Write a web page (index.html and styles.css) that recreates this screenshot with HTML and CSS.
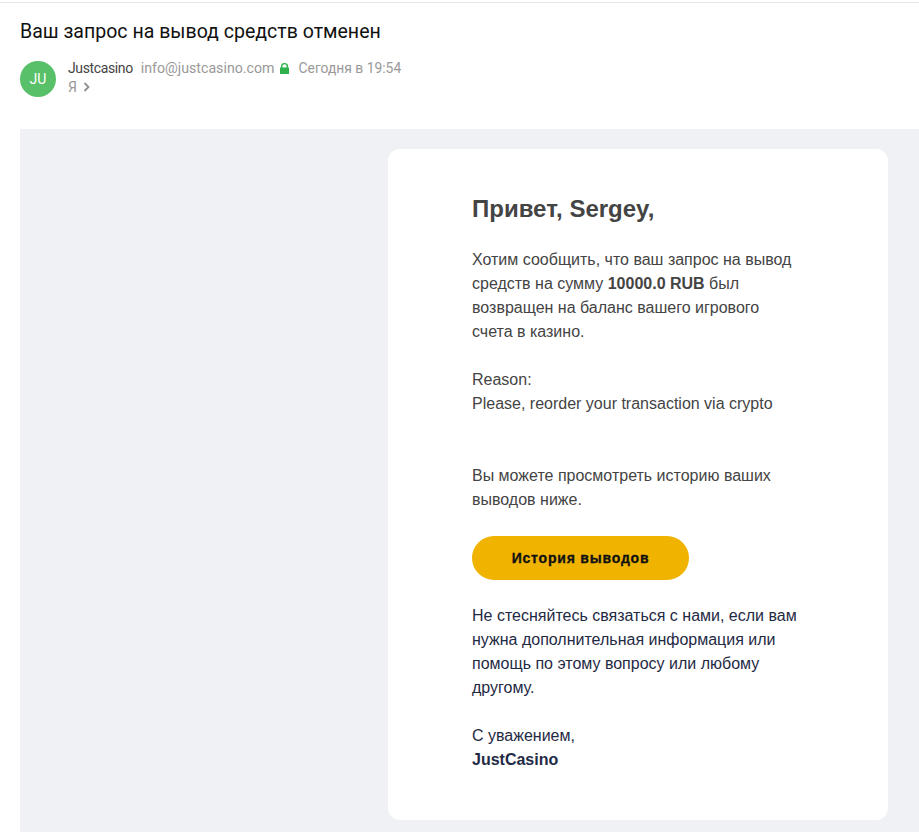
FILE: index.html
```html
<!DOCTYPE html>
<html lang="ru">
<head>
<meta charset="utf-8">
<title>Ваш запрос на вывод средств отменен</title>
<link rel="stylesheet" href="styles.css">
</head>
<body>
<header class="mail-head">
  <h1 class="subject">Ваш запрос на вывод средств отменен</h1>
  <div class="meta">
    <div class="avatar">JU</div>
    <div class="meta-text">
      <div class="meta-line">
        <span class="sender">Justcasino</span>
        <span class="addr">info@justcasino.com</span>
        <svg class="lock" width="9" height="11" viewBox="0 0 9 11"><path d="M0 4.5h1V3a3.5 3 0 0 1 7 0v1.500h1V11H0zM2.400 4.500h4.200V3a2.100 1.700 0 0 0-4.200 0z" fill="#2fb24c" fill-rule="evenodd"/></svg>
        <span class="date">Сегодня в 19:54</span>
      </div>
      <div class="meta-line to">
        <span>Я</span>
        <svg class="chev" width="7" height="10" viewBox="0 0 7 10"><path d="M1.500 1l4 4-4 4" fill="none" stroke="#8f8f8f" stroke-width="1.800"/></svg>
      </div>
    </div>
  </div>
</header>
<main class="panel">
  <article class="card">
    <h2 class="hello">Привет, Sergey,</h2>
    <p class="grey">Хотим сообщить, что ваш запрос на вывод<br>средств на сумму <b>10000.0 RUB</b> был<br>возвращен на баланс вашего игрового<br>счета в казино.</p>
    <p class="grey gap">Reason:<br>Please, reorder your transaction via crypto</p>
    <p class="grey gap2">Вы можете просмотреть историю ваших<br>выводов ниже.</p>
    <a class="btn">История выводов</a>
    <p class="navy">Не стесняйтесь связаться с нами, если вам<br>нужна дополнительная информация или<br>помощь по этому вопросу или любому<br>другому.</p>
    <p class="navy gap">С уважением,<br><b>JustCasino</b></p>
  </article>
</main>
</body>
</html>
```

FILE: styles.css
```css
* { box-sizing: border-box; }
html, body { margin: 0; padding: 0; background: #fff; height: 832px; overflow: hidden; }
body { font-family: "Liberation Sans", Arial, sans-serif; }

.mail-head {
  height: 129px;
  border-top: 1px solid #e8e8e8;
  margin-top: 2px;
  margin-bottom: -2px;
  padding: 17px 20px 0;
  font-family: Roboto, "Noto Sans", sans-serif;
}
.subject { margin: 0; font-size: 19.55px; line-height: 24px; font-weight: 400; color: #111; }
.meta { display: flex; gap: 12px; margin-top: 17px; }
.avatar {
  width: 36px; height: 36px; border-radius: 50%;
  background: #58c068; color: #fff;
  font-size: 14px; display: flex; align-items: center; justify-content: center;
}
.meta-text { font-size: 14px; line-height: 18px; color: #999; margin-top: -2px; }
.meta-line { display: flex; align-items: center; height: 18px; }
.meta-line.to { margin-top: 1px; }
.sender { color: #444; margin-right: 8px; font-size: 14px; letter-spacing: -0.38px; }
.addr { font-size: 14.2px; }
.lock { margin: 0 10px 0 5px; }
.date { font-size: 13.85px; }
.chev { margin-left: 6px; }

.panel { background: #f0f1f5; padding: 20px 31px 12px 368px; margin-left: 20px; height: 703px; }
.card {
  width: 500px; height: 671px; background: #fff; border-radius: 12px;
  padding: 44px 0 49px 84px;
  font-size: 16px; line-height: 24px;
}
.hello { margin: 0 0 23px; font-size: 24px; line-height: 32px; font-weight: 700; color: #444; }
p { margin: 0; }
.grey { color: #444; }
.navy { color: #1f2a44; }
.gap { margin-top: 24px; }
.gap2 { margin-top: 48px; }
.btn {
  display: flex; align-items: center; justify-content: center;
  width: 217px; height: 44px; margin: 24px 0 24px;
  border-radius: 22px; background: #efb300;
  color: #111; font-size: 14px; font-weight: 700;
  -webkit-text-stroke: 0.3px #111; letter-spacing: 0.8px;
}
```
